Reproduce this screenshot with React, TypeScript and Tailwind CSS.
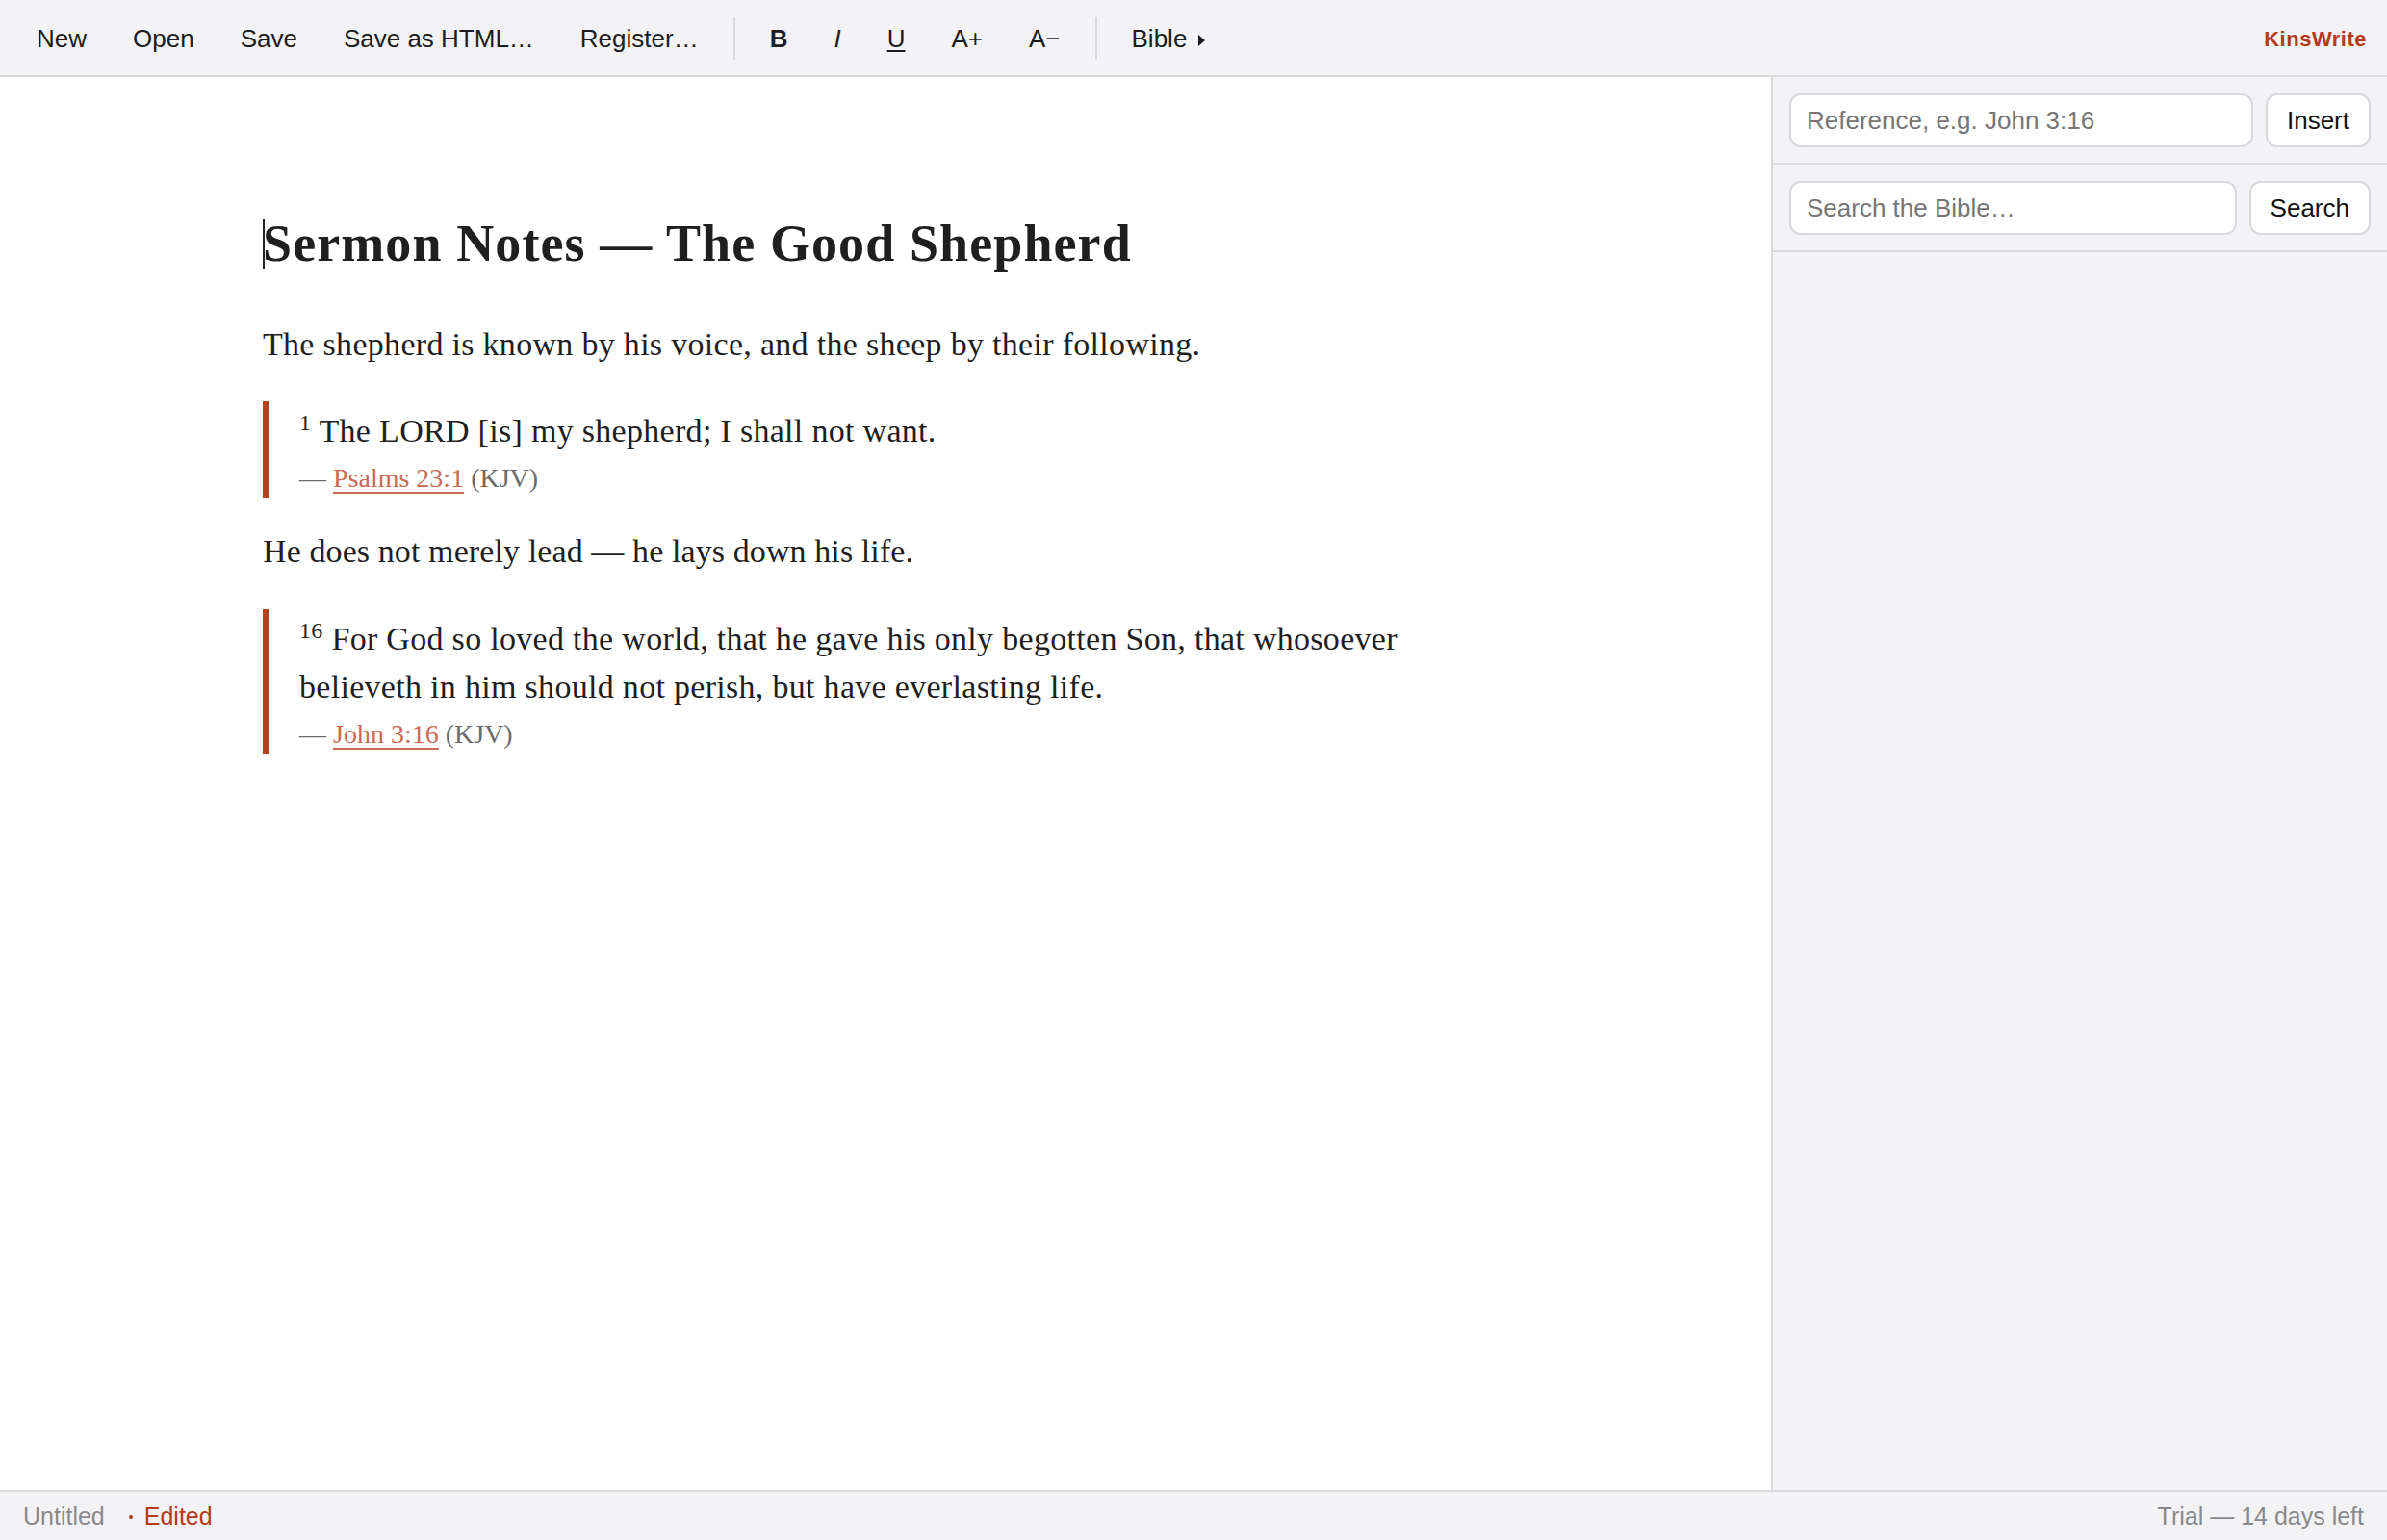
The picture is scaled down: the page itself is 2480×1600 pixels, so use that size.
import React from 'react';

const sans = "font-['Liberation_Sans',Arial,Helvetica,sans-serif]";
const serif = "font-['Liberation_Serif','Times_New_Roman',serif]";

function ToolButton({ children, className = '' }: { children: React.ReactNode; className?: string }) {
  return (
    <button type="button" className={`px-[24px] text-[26px] text-[#1c1c1e] leading-none ${className}`}>
      {children}
    </button>
  );
}

function Divider() {
  return <div className="mx-[12px] h-[44px] w-[2px] bg-[#d9d9dc]" />;
}

function Toolbar() {
  return (
    <header className="flex h-[80px] shrink-0 items-center border-b-2 border-[#dadadd] bg-[#f3f3f5] pl-[14px] pr-[21px] pt-[2px]">
      <ToolButton>New</ToolButton>
      <ToolButton>Open</ToolButton>
      <ToolButton>Save</ToolButton>
      <ToolButton>Save as HTML…</ToolButton>
      <ToolButton>Register…</ToolButton>
      <Divider />
      <ToolButton className="font-bold">B</ToolButton>
      <ToolButton className="italic">I</ToolButton>
      <ToolButton className="underline decoration-2 underline-offset-[3px]">U</ToolButton>
      <ToolButton>A+</ToolButton>
      <ToolButton>A−</ToolButton>
      <Divider />
      <ToolButton className="flex items-center gap-[12px]">
        <span>Bible</span>
        <svg width="8" height="12" viewBox="0 0 8 12" className="mt-[4px]">
          <path d="M0 0 L7 6 L0 12 Z" fill="#1c1c1e" />
        </svg>
      </ToolButton>
      <div className="ml-auto text-[22px] font-bold tracking-[0.5px] text-[#b5391b]">KinsWrite</div>
    </header>
  );
}

function Verse({ num, children, cite }: { num: string; children: React.ReactNode; cite: string }) {
  return (
    <blockquote className="border-l-[6px] border-[#b5421f] pl-[32px] pt-[6px]">
      <p className="text-[34px] leading-[50px] tracking-[0.3px] text-[#1f1f1f]">
        <sup className="text-[24px]">{num}</sup> {children}
      </p>
      <p className="mt-[3px] text-[28px] leading-[41px] text-[#6b6b6b]">
        —{' '}
        <a className="text-[#c96b55] underline decoration-[2px] underline-offset-[5px]">{cite}</a>{' '}
        (KJV)
      </p>
    </blockquote>
  );
}

function Editor() {
  return (
    <main className={`min-w-0 flex-1 overflow-hidden bg-white ${serif}`}>
      <div className="mx-auto w-[1294px] pt-[141px]">
        <h1 className="text-[54px] font-bold leading-[64px] tracking-[1.1px] text-[#1f1f1f]">
          <span className="mr-[-2px] inline-block h-[52px] w-[2px] bg-[#222] align-[-9px]" />
          Sermon Notes — The Good Shepherd
        </h1>
        <p className="mt-[48px] text-[34px] leading-[50px] tracking-[0.3px] text-[#1f1f1f]">
          The shepherd is known by his voice, and the sheep by their following.
        </p>
        <div className="mt-[34px]">
          <Verse num="1" cite="Psalms 23:1">
            The LORD [is] my shepherd; I shall not want.
          </Verse>
        </div>
        <p className="mt-[31px] text-[34px] leading-[50px] tracking-[0.1px] text-[#1f1f1f]">
          He does not merely lead — he lays down his life.
        </p>
        <div className="mt-[35px]">
          <Verse num="16" cite="John 3:16">
            For God so loved the world, that he gave his only begotten Son, that whosoever
            <br />
            believeth in him should not perish, but have everlasting life.
          </Verse>
        </div>
      </div>
    </main>
  );
}

function Sidebar() {
  const input =
    'h-[56px] min-w-0 flex-1 rounded-[12px] border-2 border-[#d9d9dd] bg-white px-[16px] text-[26px] text-[#1c1c1e] placeholder:text-[#767676] outline-none';
  const button =
    'h-[56px] shrink-0 rounded-[12px] border-2 border-[#d9d9dd] bg-white px-[20px] text-[26px] text-[#111]';
  return (
    <aside className="flex w-[640px] shrink-0 flex-col border-l-2 border-[#dadadd] bg-[#f3f3f5]">
      <div className="flex gap-[13px] border-b-2 border-[#dadadd] px-[17px] pb-[16px] pt-[17px]">
        <input className={input} placeholder="Reference, e.g. John 3:16" />
        <button type="button" className={button}>
          Insert
        </button>
      </div>
      <div className="flex gap-[13px] border-b-2 border-[#dadadd] px-[17px] pb-[16px] pt-[17px]">
        <input className={input} placeholder="Search the Bible…" />
        <button type="button" className={button}>
          Search
        </button>
      </div>
    </aside>
  );
}

function StatusBar() {
  return (
    <footer className="flex h-[52px] shrink-0 items-center justify-between border-t-2 border-[#dadadd] bg-[#f3f3f5] px-[24px] pt-[2px] text-[25px]">
      <div className="flex items-center">
        <span className="text-[#8a8a8c]">Untitled</span>
        <span className="ml-[25px] mr-[12px] h-[4px] w-[4px] rounded-full bg-[#b5391b]" />
        <span className="text-[#b5391b]">Edited</span>
      </div>
      <span className="text-[#8a8a8c]">Trial — 14 days left</span>
    </footer>
  );
}

export default function App() {
  return (
    <div className={`flex h-[1600px] w-full flex-col overflow-hidden ${sans}`}>
      <Toolbar />
      <div className="flex min-h-0 flex-1">
        <Editor />
        <Sidebar />
      </div>
      <StatusBar />
    </div>
  );
}
